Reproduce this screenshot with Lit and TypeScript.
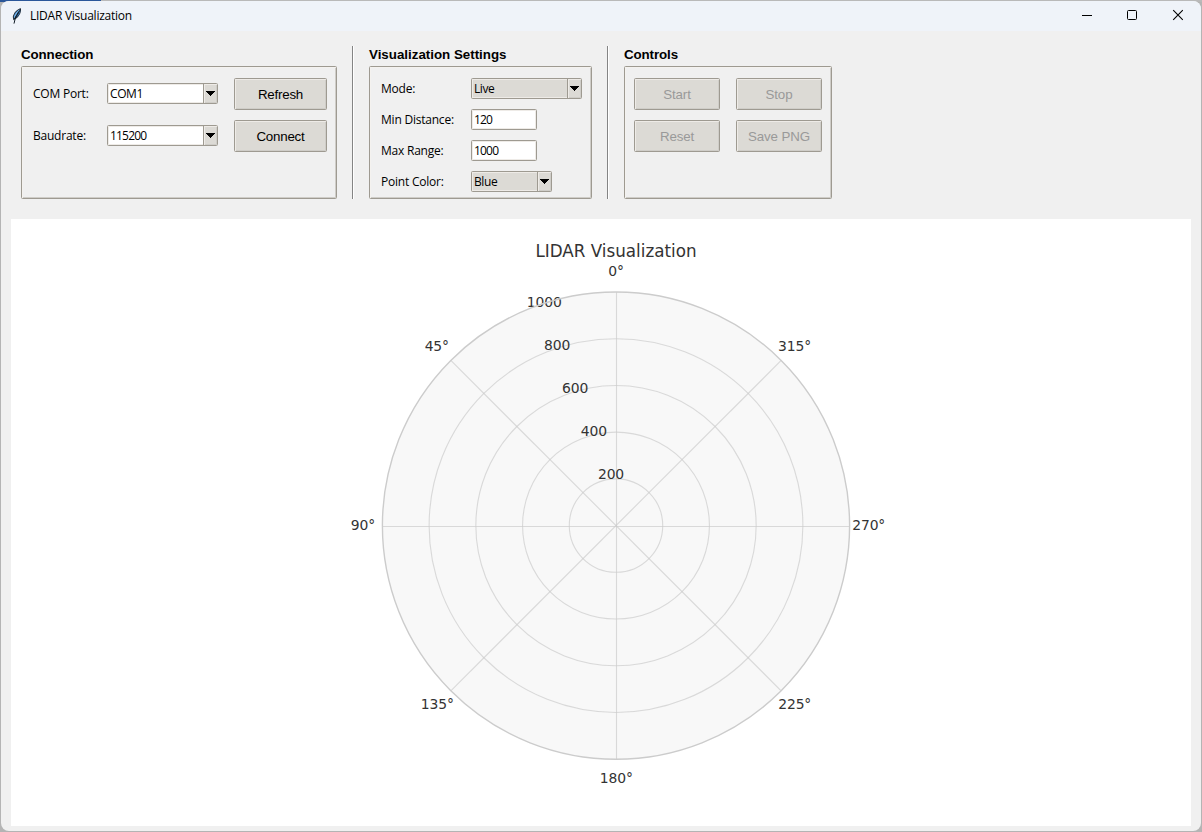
import { LitElement, html, svg, css } from "lit";
import { customElement, property } from "lit/decorators.js";

@customElement("tk-button")
class TkButton extends LitElement {
  @property() label = "";
  @property({ type: Boolean, reflect: true }) disabled = false;
  static styles = css`
    :host { display: block; height: 32px; }
    .face {
      box-sizing: border-box; width: 100%; height: 100%; padding: 0;
      display: flex; align-items: center; justify-content: center;
      font: 13.33px/16px "Liberation Sans", Arial, sans-serif; color: #000;
      letter-spacing: -0.22px;
      background: #dcdad5; border: 1px solid #9e9a91; border-radius: 1.5px;
      box-shadow: inset 1px 1px #eeebe7, inset -1px -1px #cfcdc8;
    }
    .face:disabled { color: #999; letter-spacing: -0.12px; }
    .text { padding-top: 2px; }
  `;
  render() {
    return html`<button class="face" ?disabled=${this.disabled}><span class="text">${this.label}</span></button>`;
  }
}

@customElement("tk-field")
class TkField extends LitElement {
  @property() value = "";
  @property({ type: Boolean }) combo = false;
  @property({ type: Boolean, reflect: true }) readonly = false;
  static styles = css`
    :host { display: block; height: 21px; }
    .field {
      box-sizing: border-box; height: 21px; display: flex; background: #fff;
      border: 1px solid #9e9a91; border-radius: 1.5px; overflow: hidden;
      box-shadow: inset 1px 1px #eeebe7, inset -1px -1px #eeebe7;
    }
    :host([readonly]) .field { background: #dcdad5; }
    .text {
      flex: 1; padding-left: 2px; white-space: nowrap; color: #000;
      font: 12px/20px "Open Sans", "Noto Sans", sans-serif; letter-spacing: -0.4px;
    }
    .digits { letter-spacing: -0.8px; }
    .arrow {
      width: 13px; border-left: 1px solid #9e9a91; background: #dcdad5;
      box-shadow: inset 1px 1px #eeebe7, inset -1px -1px #cfcdc8;
    }
    svg { display: block; }
  `;
  render() {
    const digits = /^\d+$/.test(this.value) ? "digits" : "";
    return html`<div class="field"><span class="text ${digits}">${this.value}</span>${this.combo
      ? html`<span class="arrow"><svg width="13" height="19" shape-rendering="crispEdges"><path d="M2 7h9v1h-1v1h-1v1h-1v1h-1v1h-1v-1h-1v-1h-1v-1h-1v-1h-1z" fill="#000"/></svg></span>`
      : ""}</div>`;
  }
}

@customElement("polar-chart")
class PolarChart extends LitElement {
  static styles = css`
    :host { display: block; }
    svg { display: block; }
    text { font-family: "DejaVu Sans", sans-serif; fill: #333; text-anchor: middle; }
    .tick { font-size: 13.9px; letter-spacing: -0.12px; }
    .title { font-size: 17.4px; }
    .grid { fill: none; stroke: #ccc; stroke-opacity: 0.7; stroke-width: 1.1; }
    .face { fill: #f8f8f8; }
    .rim { fill: none; stroke: #ccc; stroke-width: 1.4; }
  `;
  render() {
    const cx = 605;
    const cy = 306.6;
    const r = 233.6;
    const d = r * Math.SQRT1_2;
    const rings = [0.2, 0.4, 0.6, 0.8];
    const angles: [string, number, number][] = [
      ["0°", 605, 57], ["45°", 425.8, 132], ["90°", 352, 311], ["135°", 426.3, 490],
      ["180°", 605.3, 564], ["225°", 783.7, 490], ["270°", 857.7, 311], ["315°", 783.5, 132],
    ];
    const ranges: [string, number, number][] = [
      ["200", 600, 260], ["400", 582.8, 217], ["600", 564.2, 174], ["800", 546.2, 131], ["1000", 533.3, 88],
    ];
    return html`<svg width="1180" height="607" viewBox="0 0 1180 607">
      <circle class="face" cx=${cx} cy=${cy} r=${r} />
      <path class="grid" d="M605.5 ${cy - r}V${cy + r}" />
      <path class="grid" d="M${cx - r} 307.5H${cx + r}" />
      <path class="grid" d="M${cx - d} ${cy - d}L${cx + d} ${cy + d}" />
      <path class="grid" d="M${cx - d} ${cy + d}L${cx + d} ${cy - d}" />
      ${rings.map((k) => svg`<circle class="grid" cx=${cx} cy=${cy} r=${r * k} />`)}
      ${[...angles, ...ranges].map(([t, x, y]) => svg`<text class="tick" x=${x} y=${y}>${t}</text>`)}
      <circle class="rim" cx=${cx} cy=${cy} r=${r} />
      <text class="title" x="605" y="38" textLength="161" lengthAdjust="spacingAndGlyphs">LIDAR Visualization</text>
    </svg>`;
  }
}

@customElement("app-root")
class AppRoot extends LitElement {
  static styles = css`
    :host {
      display: block; box-sizing: border-box; width: 1202px; height: 832px; overflow: hidden;
      padding: 1px; background: linear-gradient(90deg, #2b579a 0 101px, #b9b9b9 101px) 0 0 / 100% 2px no-repeat, #b4b4b4;
      font: 12px/16px "Open Sans", "Noto Sans", sans-serif; color: #000;
    }
    .window {
      box-sizing: border-box; height: 830px; border-radius: 8px; overflow: hidden;
      background: #f0f0f0; display: flex; flex-direction: column;
    }
    .titlebar { height: 30px; flex: none; display: flex; align-items: center; background: #eff3f9; }
    .feather { margin-left: 8px; flex: none; }
    .caption { flex: 1; margin-left: 5px; letter-spacing: -0.25px; }
    .sysbuttons { flex: none; display: flex; }
    .toolbar { display: flex; padding: 14px 20px 20px; height: 154px; }
    .group { display: flex; flex-direction: column; }
    .heading {
      box-sizing: border-box; padding-top: 1px; height: 21px; letter-spacing: -0.1px;
      font: bold 13.33px/18px "Liberation Sans", Arial, sans-serif;
    }
    .spaced { letter-spacing: 0; }
    .box {
      box-sizing: border-box; height: 133px; border: 1px solid #9e9a91; border-radius: 1.5px;
      box-shadow: inset 1px 1px #f4f2ef, inset -1px -1px #cfcdc8; display: grid; align-content: start;
    }
    .rule { width: 1px; height: 153px; margin: 1px 16px 0 15px; background: #848484; box-shadow: 1px 0 #fff; }
    .connection { width: 316px; padding: 11px 9px 0 11px; grid-template-columns: 74px 127px 93px; grid-auto-rows: 32px; row-gap: 10px; align-items: center; }
    .connection tk-field { width: 111px; height: 22px; }
    .settings { width: 223px; padding: 11px 9px 0 11px; grid-template-columns: 90px 1fr; grid-auto-rows: 21px; row-gap: 10px; align-items: center; }
    .controls { width: 208px; padding: 11px 9px 0; grid-template-columns: 86px 86px; gap: 10px 16px; }
    .label { white-space: nowrap; letter-spacing: -0.22px; }
    .w111 { width: 111px; }
    .w66 { width: 66px; }
    .w81 { width: 81px; }
    .plot { width: 1180px; height: 607px; margin-left: 10px; background: #fff; }
  `;
  render() {
    return html`<div class="window">
      <header class="titlebar">
        <svg class="feather" width="16" height="16" viewBox="0 0 16 16">
          <path d="M11.9 .3C8.8 .8 4.6 4.6 3.8 8.7L4.4 12.2C9 10.6 12.8 5 11.9 .3z" fill="#17222d"/>
          <path d="M10.9 1.2C8.2 2.4 5.4 5.4 4.7 8.8L5 10.6C6.8 8.6 9.6 4 10.9 1.2z" fill="#6fb0ea"/>
          <path d="M11.2 2.2C10 5.2 8.4 7.6 6.6 9.9C9.4 8.2 11.6 5.2 11.2 2.2z" fill="#3c78b4"/>
          <path d="M9.8 3.4Q5.8 8.4 5 15.6" fill="none" stroke="#111c26" stroke-width="1"/>
        </svg>
        <span class="caption">LIDAR Visualization</span>
        <div class="sysbuttons">
          <svg width="46" height="30"><path d="M19 14.5h10" stroke="#000"/></svg>
          <svg width="46" height="30"><rect x="18.5" y="9.5" width="9" height="9" rx="1" fill="none" stroke="#000"/></svg>
          <svg width="46" height="30"><path d="M18.2 9.2l9.6 9.6M27.8 9.2l-9.6 9.6" stroke="#000" stroke-width="1.1"/></svg>
        </div>
      </header>
      <section class="toolbar">
        <div class="group">
          <div class="heading">Connection</div>
          <div class="box connection">
            <span class="label">COM Port:</span><tk-field combo value="COM1"></tk-field><tk-button label="Refresh"></tk-button>
            <span class="label">Baudrate:</span><tk-field combo value="115200"></tk-field><tk-button label="Connect"></tk-button>
          </div>
        </div>
        <div class="rule"></div>
        <div class="group">
          <div class="heading spaced">Visualization Settings</div>
          <div class="box settings">
            <span class="label">Mode:</span><tk-field class="w111" combo readonly value="Live"></tk-field>
            <span class="label">Min Distance:</span><tk-field class="w66" value="120"></tk-field>
            <span class="label">Max Range:</span><tk-field class="w66" value="1000"></tk-field>
            <span class="label">Point Color:</span><tk-field class="w81" combo readonly value="Blue"></tk-field>
          </div>
        </div>
        <div class="rule"></div>
        <div class="group">
          <div class="heading">Controls</div>
          <div class="box controls">
            <tk-button disabled label="Start"></tk-button><tk-button disabled label="Stop"></tk-button>
            <tk-button disabled label="Reset"></tk-button><tk-button disabled label="Save PNG"></tk-button>
          </div>
        </div>
      </section>
      <polar-chart class="plot"></polar-chart>
    </div>`;
  }
}
